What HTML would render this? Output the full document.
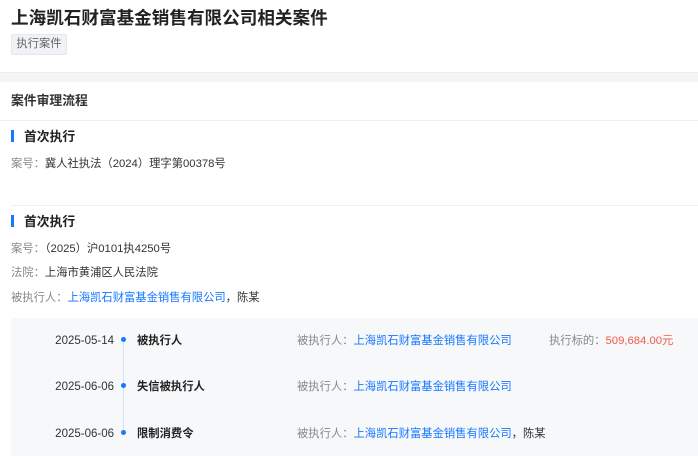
<!DOCTYPE html>
<html><head><meta charset="utf-8"><style>
*{margin:0;padding:0;box-sizing:border-box}
body{width:698px;height:456px;overflow:hidden;background:#fff;font-family:"Liberation Sans","Noto Sans CJK SC",sans-serif;color:#333;position:relative}
.a{position:absolute;white-space:nowrap}
.t{left:11px;top:6px;font-size:17.6px;font-weight:bold;color:#222;line-height:24px}
.tag{left:11px;top:34px;width:56px;height:21px;background:#f0f2f5;border:1px solid #e4e7ec;border-radius:2px;font-size:11.3px;color:#666;line-height:19px;text-align:center}
.band{left:0;top:72px;width:698px;height:10px;background:#f5f5f5;border-top:1px solid #eee}
.h{left:11px;top:92px;font-size:12.8px;font-weight:bold;color:#333;line-height:18px}
.ln{left:0;top:120px;width:698px;height:1px;background:#eee}
.bar{left:11px;width:3px;height:12px;background:#1677ff}
.s{left:24px;font-size:12.8px;font-weight:bold;color:#222;line-height:18px}
.r{left:11px;font-size:11.3px;color:#333;line-height:16px}
.g{color:#888}.b{color:#1677ff}.red{color:#f5574b}
.box{left:11px;top:318px;width:687px;height:138px;background:#f7f8fa}
.d{left:40px;width:74px;text-align:right;font-size:11.5px;color:#333;line-height:16px}
.dot{left:121px;width:5px;height:5px;border-radius:50%;background:#1677ff}
.vl{left:123px;top:342px;width:1px;height:92px;background:#cfe3ff}
.lb{left:137px;font-size:11.3px;font-weight:bold;color:#222;line-height:16px}
</style></head><body>
<div class="a t">上海凯石财富基金销售有限公司相关案件</div>
<div class="a tag">执行案件</div>
<div class="a band"></div>
<div class="a h">案件审理流程</div>
<div class="a ln"></div>
<div class="a bar" style="top:130px"></div>
<div class="a s" style="top:128px">首次执行</div>
<div class="a r" style="top:156px"><span class="g">案号：</span>冀人社执法（2024）理字第00378号</div>
<div class="a" style="left:11px;top:205px;width:687px;height:1px;background:#f0f0f0"></div>
<div class="a bar" style="top:215px"></div>
<div class="a s" style="top:213px">首次执行</div>
<div class="a r" style="top:241px"><span class="g">案号：</span>（2025）沪0101执4250号</div>
<div class="a r" style="top:265px"><span class="g">法院：</span>上海市黄浦区人民法院</div>
<div class="a r" style="top:290px"><span class="g">被执行人：</span><span class="b">上海凯石财富基金销售有限公司</span>，陈某</div>
<div class="a box"></div>
<div class="a vl"></div>
<div class="a d" style="top:333px">2025-05-14</div><div class="a dot" style="top:337px"></div><div class="a lb" style="top:333px">被执行人</div>
<div class="a r" style="left:297px;top:333px"><span class="g">被执行人：</span><span class="b">上海凯石财富基金销售有限公司</span></div>
<div class="a r" style="left:549px;top:333px"><span class="g">执行标的：</span><span class="red">509,684.00元</span></div>
<div class="a d" style="top:379px">2025-06-06</div><div class="a dot" style="top:383px"></div><div class="a lb" style="top:379px">失信被执行人</div>
<div class="a r" style="left:297px;top:379px"><span class="g">被执行人：</span><span class="b">上海凯石财富基金销售有限公司</span></div>
<div class="a d" style="top:426px">2025-06-06</div><div class="a dot" style="top:430px"></div><div class="a lb" style="top:426px">限制消费令</div>
<div class="a r" style="left:297px;top:426px"><span class="g">被执行人：</span><span class="b">上海凯石财富基金销售有限公司</span>，陈某</div>
</body></html>
